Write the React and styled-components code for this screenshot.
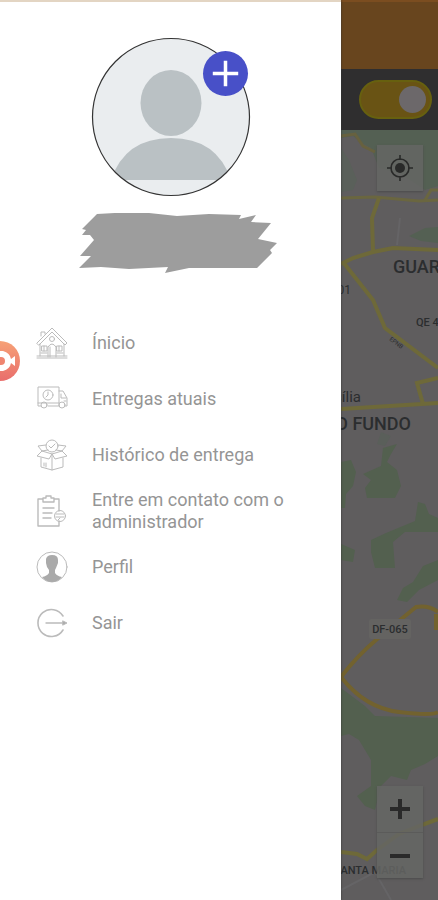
import styled, { createGlobalStyle } from 'styled-components';

const GlobalStyle = createGlobalStyle`
    * {
        box-sizing: border-box;
    }

    body {
        margin: 0;
        font-family: Roboto, "Liberation Sans", sans-serif;
        background-color: #5f5d5d;
    }
`;

const Screen = styled.div`
    position: relative;
    display: grid;
    grid-template-columns: min(341px, 78%) 1fr;
    min-height: 100vh;
    overflow: hidden;
`;

const Drawer = styled.aside`
    display: flex;
    flex-direction: column;
    align-items: center;
    padding-top: 35px;
    background-color: #fff;
    border-top: 2px solid #e3d5c3;
    box-shadow: 0 0 2px #333;
    z-index: 1;
`;

const AvatarWrapper = styled.div`
    position: relative;
    width: 160px;
    height: 160px;
`;

const Avatar = styled.svg`
    display: block;
    width: 100%;
    height: 100%;
`;

const AddPhoto = styled.button`
    position: absolute;
    top: 14px;
    right: 3px;
    width: 45px;
    height: 45px;
    padding: 0;
    border: none;
    border-radius: 50%;
    background-color: #4850c8;
    cursor: pointer;

    svg {
        display: block;
        width: 100%;
        height: 100%;
    }
`;

const HiddenName = styled.svg`
    width: 200px;
    height: 60px;
    margin-top: 16px;
    margin-left: 16px;
`;

const Menu = styled.nav`
    width: 100%;
    margin-top: 42px;
`;

const MenuItem = styled.a`
    display: flex;
    align-items: center;
    gap: 24px;
    height: 56px;
    padding: 0 36px;
    color: #959595;
    font-size: 18px;
    line-height: 22px;
    text-decoration: none;
`;

const MenuIcon = styled.svg`
    flex: none;
    width: 32px;
    height: 32px;
    fill: none;
    stroke: #bbb;
    stroke-width: 1;
    stroke-linejoin: round;
    stroke-linecap: round;
`;

const MenuText = styled.span`
    flex: 1;
    margin-right: -20px;
`;

const RecordButton = styled.button`
    position: absolute;
    top: 341px;
    left: -20px;
    z-index: 2;
    width: 40px;
    height: 40px;
    padding: 0;
    border: none;
    border-radius: 50%;
    background: linear-gradient(#f6a176, #e96e6c);
    cursor: pointer;

    svg {
        display: block;
    }
`;

const Page = styled.main`
    display: flex;
    flex-direction: column;
    min-width: 0;
`;

const Header = styled.header`
    height: 69px;
    border-top: 2px solid #7b4d20;
    background-color: #68451e;
`;

const StatusBar = styled.div`
    display: flex;
    align-items: center;
    justify-content: flex-end;
    height: 61px;
    padding-right: 6px;
    background-color: #2f2e2f;
`;

const Toggle = styled.input`
    appearance: none;
    display: flex;
    justify-content: flex-start;
    width: 73px;
    height: 39px;
    margin: 0;
    padding: 4px;
    border: 2px solid #67600f;
    border-radius: 20px;
    background-color: #555;
    cursor: pointer;

    &:checked {
        justify-content: flex-end;
        background-color: #695314;
    }

    &::before {
        content: '';
        width: 27px;
        height: 27px;
        border-radius: 50%;
        background-color: #6c686a;
    }
`;

const MapArea = styled.section`
    position: relative;
    display: flex;
    flex: 1;
    flex-direction: column;
    align-items: flex-end;
    justify-content: space-between;
    min-height: 770px;
    padding: 15px 15px 22px;
    overflow: hidden;
`;

const MapDrawing = styled.svg`
    position: absolute;
    inset: 0;
    width: 100%;
    height: 100%;

    text {
        fill: #2b2d2f;
        font-family: Roboto, "Liberation Sans", sans-serif;
    }
`;

const Road = styled.path`
    fill: none;
    stroke: ${props => props.$color || '#6e6939'};
    stroke-width: ${props => props.$width || 4};
`;

const Controls = styled.div`
    position: relative;
    display: flex;
    flex-direction: column;
    width: 46px;
    background-color: #656664d9;
    box-shadow: 0 1px 2px #4c4c4c;
`;

const MapButton = styled.button`
    display: flex;
    align-items: center;
    justify-content: center;
    width: 46px;
    height: 46px;
    padding: 0;
    border: none;
    background-color: transparent;
    cursor: pointer;

    & + & {
        border-top: 1px solid #5b5b5a;
    }
`;

const HomeIcon = () => (
    <MenuIcon viewBox="0 0 32 32">
        <path d="M1 16 16 1 31 16 29 18 16 5 3 18ZM5 9V5H9V7M4 17V29M28 17V29M1 31H31M1 29H31" />
        <circle cx="16" cy="12" r="2.5" />
        <path d="M12 30V20Q16 14 20 20V30M14 30V20M6 19H11V24H6ZM21 19H26V24H21ZM8 19V24M23 19V24M5 26H11M21 26H27" />
    </MenuIcon>
);

const TruckIcon = () => (
    <MenuIcon viewBox="0 0 32 32">
        <path d="M5 23H2V4H23V23H12M23 8H27L31 15V23H29M2 20H23M25 11V15H30M30 18H28" />
        <circle cx="12" cy="12" r="5" />
        <path d="M12 9V12L10 14" />
        <circle cx="8" cy="22" r="3" />
        <circle cx="26" cy="22" r="3" />
    </MenuIcon>
);

const BoxIcon = () => (
    <MenuIcon viewBox="0 0 32 32">
        <circle cx="16" cy="7" r="6" />
        <path d="M13 7 15 9 19 5M10 6 2 7 6 12 16 15 26 12 30 7 22 6M6 12 1 17 13 20 16 15 19 20 31 17 26 12M16 15V31M5 19V28L16 31 27 28V19M6 12 12 11M26 12 20 11M8 24V27M10 24V28" />
    </MenuIcon>
);

const ClipboardIcon = () => (
    <MenuIcon viewBox="0 0 32 32">
        <path d="M7 4H2V31H23V26M18 4H23V16M7 7V3H10V1H15V3H18V7ZM7 13H18M7 18H16M7 23H15" strokeWidth="1.4" />
        <circle cx="24" cy="21" r="5.5" />
        <path d="M20 19H28M20 22H28M22 25 24 23" />
    </MenuIcon>
);

const ProfileIcon = () => (
    <MenuIcon viewBox="0 0 32 32">
        <circle cx="16" cy="16" r="15" />
        <path
            d="M10 8Q11 4 16 4 22 4 22 9V12L20 17 19 19V22Q21 25 26 26 22 31 16 31 10 31 6 26 11 25 13 22V19L11 16 10 12Z"
            fill="#aaa"
            stroke="none"
        />
    </MenuIcon>
);

const ExitIcon = () => (
    <MenuIcon viewBox="0 0 32 32">
        <path d="M27 9A13.5 13.5 0 1 0 27 23" strokeWidth="1.6" />
        <path d="M10 16H29" strokeWidth="1.4" />
        <path d="M27 14 31 16 27 18Z" fill="#aaa" />
    </MenuIcon>
);

const menuItems = [
    { label: 'Ínicio', href: '#inicio', icon: HomeIcon },
    { label: 'Entregas atuais', href: '#entregas', icon: TruckIcon },
    { label: 'Histórico de entrega', href: '#historico', icon: BoxIcon },
    { label: 'Entre em contato com o administrador', href: '#contato', icon: ClipboardIcon },
    { label: 'Perfil', href: '#perfil', icon: ProfileIcon },
    { label: 'Sair', href: '#sair', icon: ExitIcon },
];

const SideMenu = () => (
    <Drawer>
        <AvatarWrapper>
            <Avatar viewBox="0 0 160 160" role="img" aria-label="Foto de perfil">
                <clipPath id="avatar-clip">
                    <circle cx="80" cy="80" r="78" />
                </clipPath>
                <circle cx="80" cy="80" r="78.5" fill="#eaedef" />
                <g fill="#bac1c4" clipPath="url(#avatar-clip)">
                    <ellipse cx="80" cy="66" rx="30.5" ry="33" />
                    <path d="M20 143Q34 101 80 101T140 143Z" />
                </g>
                <circle cx="80" cy="80" r="78.5" fill="none" stroke="#333" strokeWidth="1.2" />
            </Avatar>
            <AddPhoto aria-label="Adicionar foto">
                <svg viewBox="0 0 46 46">
                    <path d="M23 10V36M10 23H36" stroke="#fff" strokeWidth="3.6" />
                </svg>
            </AddPhoto>
        </AvatarWrapper>
        <HiddenName viewBox="0 0 200 60" aria-hidden="true">
            <path
                d="M18 1Q45-1 70 0L98 3 130 1 162 2 160 6 177 2 172 9 192 10 179 26 198 30 191 37 193 40 178 55 110 55 86 60 89 54 50 56 22 54 0 55 12 43 1 43 15 27 11 22 3 22 7 17 3 16Z"
                fill="#9d9d9d"
            />
        </HiddenName>
        <Menu>
            {menuItems.map(({ label, href, icon: Icon }) => (
                <MenuItem key={href} href={href}>
                    <Icon />
                    <MenuText>{label}</MenuText>
                </MenuItem>
            ))}
        </Menu>
    </Drawer>
);

const DeliveryMap = () => (
    <MapArea>
        <MapDrawing viewBox="0 0 97 770" preserveAspectRatio="xMinYMin slice">
            <rect width="97" height="770" fill="#5f5d5e" />
            <g fill="#546053">
                <path d="M0 0H97V56L84 60 60 44 38 38 30 18 22 14 12 6 0 8Z" />
                <path d="M0 18 8 30 16 50 12 60 0 62Z" fill="#5a605a" />
                <path d="M68 106 84 98 97 97V113L80 111Z" />
            </g>
            <g fill="#53604f">
                <path d="M40 302 50 306 44 316 36 314Z" fill="#5a5f5a" />
                <path d="M0 332 10 330 15 342 12 356 5 364 4 378 0 378ZM42 318 56 314 50 324 46 332 56 340 60 356 54 368 26 368 24 358 30 350 22 344 40 336Z" />
                <path d="M77 372 84 374 88 384 97 388V402H78L64 402 52 412 54 438 34 438 30 422 30 410 45 403 74 391ZM0 414 14 420 12 432 0 430ZM97 430V450L78 460 66 472 56 470 62 458 72 452 82 436Z" />
                <path d="M0 558 24 576 34 586 97 588V626L84 634 70 640 66 650 50 646 40 656 34 680 24 676 16 666 30 656 30 630 18 610 8 604 0 606Z" />
            </g>
            <Road d="M0 6 14 4 22 16 34 22" $width="3" $color="#67613f" />
            <Road d="M0 68 34 67 78 71 97 70M84 70 90 60 97 60" $width="3" $color="#6a6640" />
            <Road d="M38 68 31 88 32 122M0 134 12 128 32 122 52 118 97 120" />
            <Road d="M2 132 32 170 44 198 97 238" />
            <Road d="M0 279 97 273M82 274 76 253 97 248" />
            <Road d="M0 547Q16 526 35 510T75 477Q88 475 97 482M95 484V500M0 547Q24 578 58 582T97 582" $color="#72622f" />
            <Road d="M0 722 16 724 26 729 36 720 58 704 78 696 97 689" />
            <Road d="M56 115 59 88M0 760 34 742 50 770" $color="#656466" $width="2" />
            <text x="52" y="143" fontSize="18" fontWeight="500">GUARÁ</text>
            <text x="10" y="164" fontSize="12" textAnchor="end">Q 01</text>
            <text x="75" y="196" fontSize="11" fontWeight="500">QE 40</text>
            <text x="48" y="210" fontSize="6" transform="rotate(36 48 210)">EPNB</text>
            <text x="20" y="272" fontSize="15" textAnchor="end">Brasília</text>
            <text x="70" y="300" fontSize="18" fontWeight="500" textAnchor="end">NÚCLEO FUNDO</text>
            <rect x="28" y="489" width="42" height="20" rx="2" fill="#646361" />
            <text x="49" y="503" fontSize="11" fontWeight="500" textAnchor="middle">DF-065</text>
            <text x="65" y="744" fontSize="11" fontWeight="500" textAnchor="end">SANTA MARIA</text>
        </MapDrawing>
        <Controls>
            <MapButton aria-label="Minha localização">
                <svg width="26" height="26" viewBox="0 0 26 26">
                    <circle cx="13" cy="13" r="5" fill="#292a29" />
                    <path
                        d="M13 4A9 9 0 1 1 13 22A9 9 0 1 1 13 4M13 0V5M13 21V26M0 13H5M21 13H26"
                        fill="none"
                        stroke="#292a29"
                        strokeWidth="1.6"
                    />
                </svg>
            </MapButton>
        </Controls>
        <Controls>
            <MapButton aria-label="Aumentar zoom">
                <svg width="20" height="20" viewBox="0 0 20 20">
                    <path d="M10 0V20M0 10H20" stroke="#2a2a2a" strokeWidth="4" />
                </svg>
            </MapButton>
            <MapButton aria-label="Diminuir zoom">
                <svg width="20" height="20" viewBox="0 0 20 20">
                    <path d="M0 10H20" stroke="#2a2a2a" strokeWidth="4" />
                </svg>
            </MapButton>
        </Controls>
    </MapArea>
);

const App = () => (
    <>
        <GlobalStyle />
        <Screen>
            <SideMenu />
            <Page>
                <Header />
                <StatusBar>
                    <Toggle type="checkbox" role="switch" aria-label="Disponível" defaultChecked />
                </StatusBar>
                <DeliveryMap />
            </Page>
            <RecordButton aria-label="Gravar tela">
                <svg width="40" height="40" viewBox="0 0 40 40">
                    <path
                        d="M12 10H23Q30 12 31 18L35 15V25L31 22Q30 28 23 30H12Z"
                        fill="#fff"
                    />
                    <circle cx="21" cy="20" r="4" fill="#ef8570" />
                </svg>
            </RecordButton>
        </Screen>
    </>
);

export default App;
